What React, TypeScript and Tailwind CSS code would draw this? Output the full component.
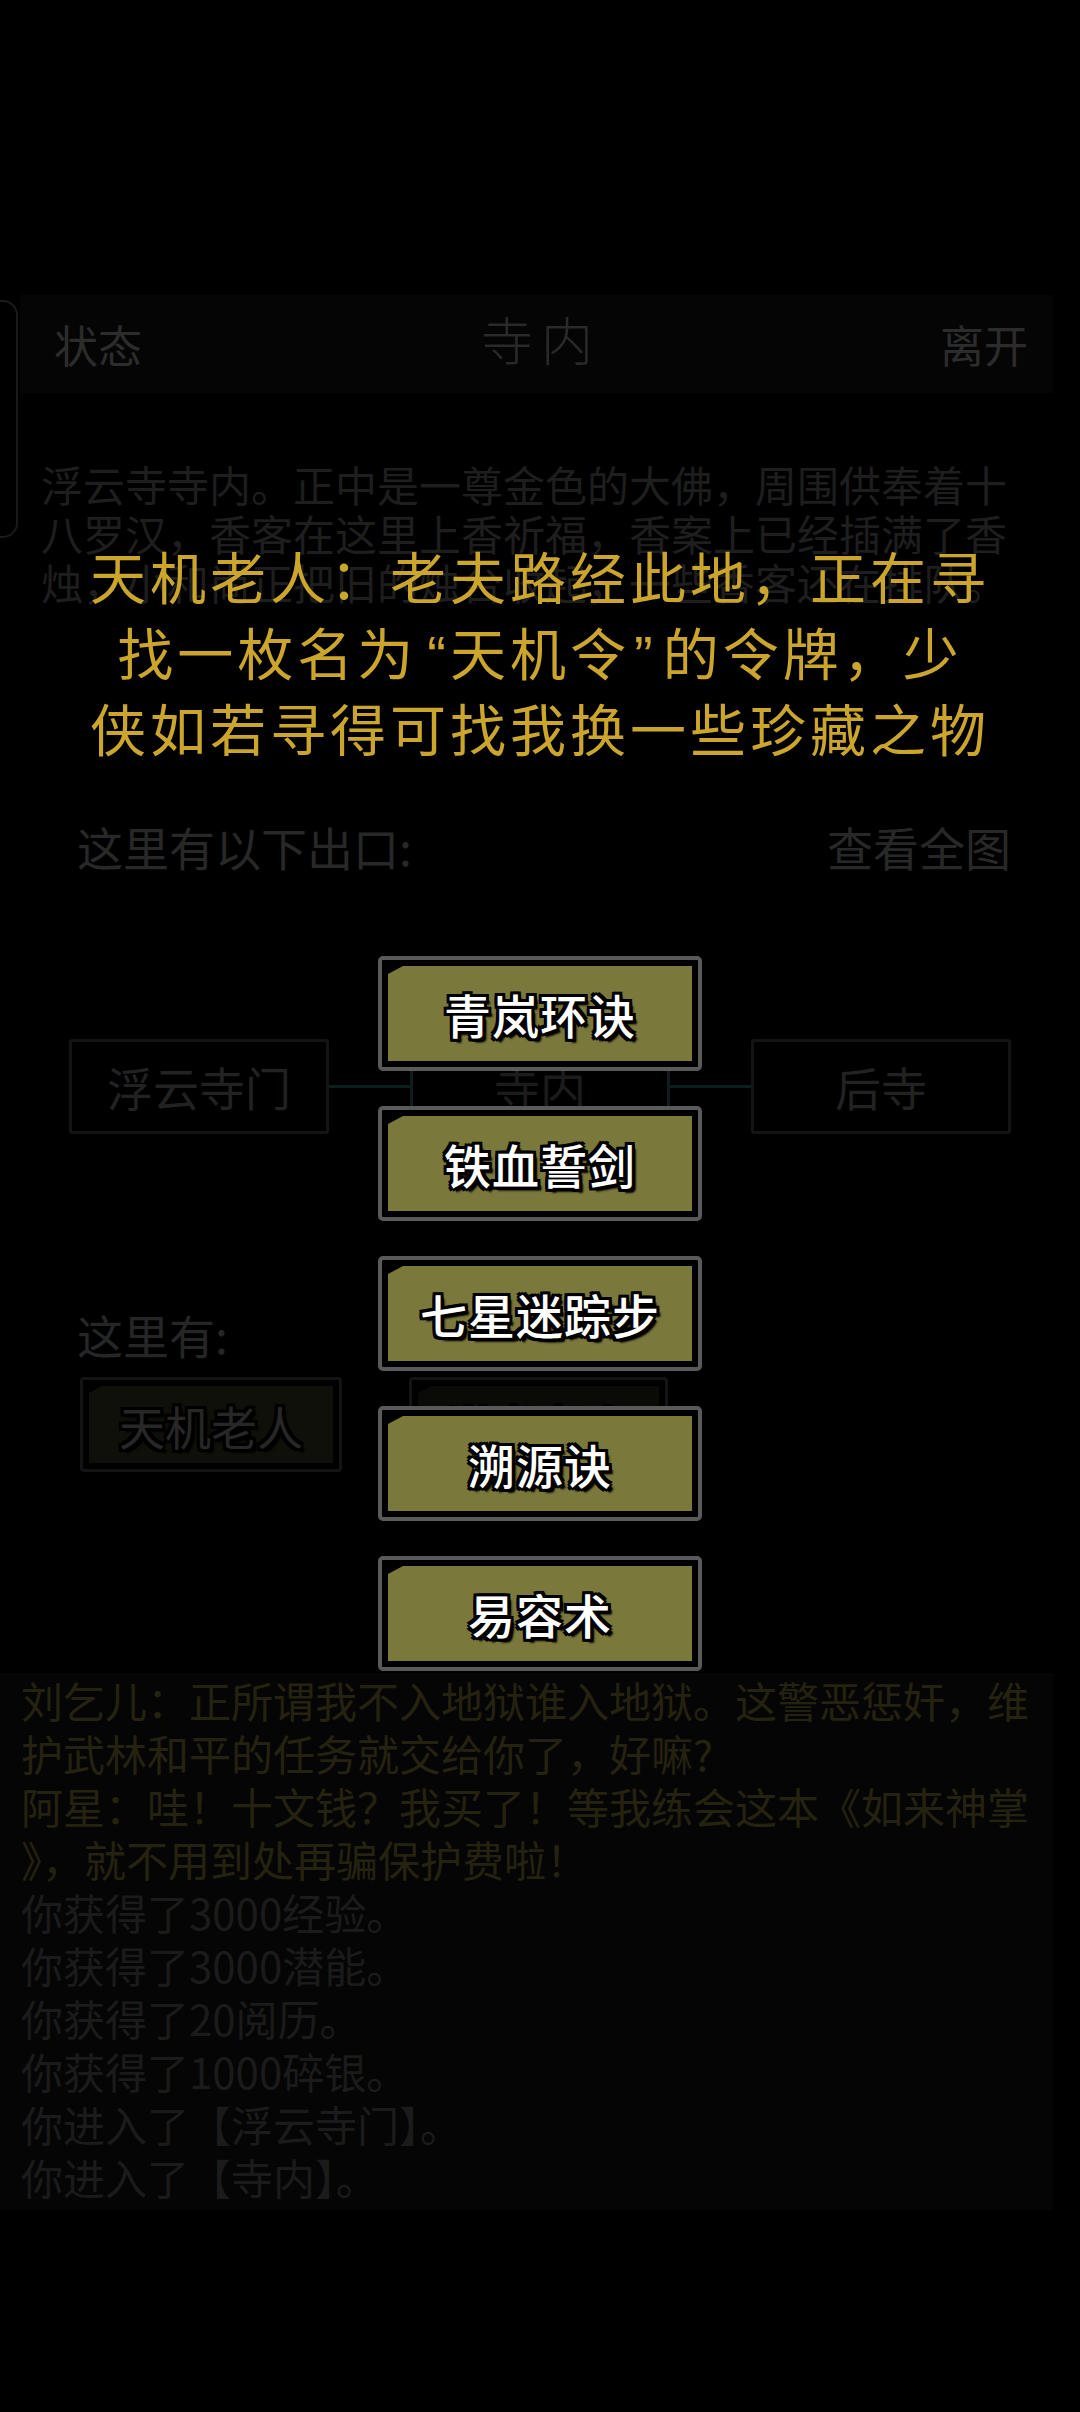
import React from 'react';

const skills = ['青岚环诀', '铁血誓剑', '七星迷踪步', '溯源诀', '易容术'];

const logLines = [
  { text: '刘乞儿：正所谓我不入地狱谁入地狱。这警恶惩奸，维', talk: true },
  { text: '护武林和平的任务就交给你了，好嘛?', talk: true },
  { text: '阿星：哇！十文钱？我买了！等我练会这本《如来神掌', talk: true },
  { text: '》，就不用到处再骗保护费啦！', talk: true },
  { text: '你获得了3000经验。', talk: false },
  { text: '你获得了3000潜能。', talk: false },
  { text: '你获得了20阅历。', talk: false },
  { text: '你获得了1000碎银。', talk: false },
  { text: '你进入了【浮云寺门】。', talk: false },
  { text: '你进入了【寺内】。', talk: false },
];

const stroke =
  '[text-shadow:-3px_-3px_0_#000,3px_-3px_0_#000,-3px_3px_0_#000,3px_3px_0_#000,0_3px_0_#000,0_-3px_0_#000,3px_0_0_#000,-3px_0_0_#000,4px_4px_2px_#000]';

const SkillButton = ({ label }: { label: string }) => (
  <div className="w-[324px] h-[115px] border-[4px] border-[#5a5a5a] rounded-[5px] bg-black p-[6px]">
    <div className="w-full h-full bg-[#7a783b] [clip-path:polygon(15px_0,100%_0,100%_100%,0_100%,0_8px)] flex items-center justify-center">
      <span className={`text-[47px] leading-none font-medium tracking-[1px] text-white ${stroke}`}>{label}</span>
    </div>
  </div>
);

const NpcButton = ({ label, width, fill }: { label: string; width: string; fill: string }) => (
  <div className={`${width} h-[95px] border-[3px] border-[#141414] rounded-[4px] bg-black p-[6px]`}>
    <div className={`w-full h-full ${fill} [clip-path:polygon(13px_0,100%_0,100%_100%,0_100%,0_7px)] flex items-center justify-center`}>
      <span className={`text-[46px] leading-none text-[#272727] ${stroke}`}>{label}</span>
    </div>
  </div>
);

const MapBox = ({ label, active }: { label: string; active?: boolean }) => (
  <div
    className={`w-[260px] h-[95px] border-[3px] rounded-[3px] flex items-center justify-center text-[46px] ${
      active ? 'border-[#0f1d1d] text-[#1c1c1c]' : 'border-[#141414] text-[#222222]'
    }`}
  >
    {label}
  </div>
);

export default function App() {
  return (
    <div className="relative w-[1080px] h-[2412px] bg-black overflow-hidden font-['Noto_Sans_CJK_SC','Noto_Sans',sans-serif]">
      {/* side drawer handle */}
      <div className="absolute left-[-20px] top-[300px] w-[38px] h-[238px] rounded-[15px] border-2 border-[#1a1a1a]" />

      <div className="pt-[295px]">
        {/* header */}
        <div className="ml-[20px] w-[1033px] h-[98px] bg-[#050505] grid grid-cols-3 items-center pl-[34px] pr-[25px]">
          <span className="justify-self-start text-[44px] text-[#2c2c2c]">状态</span>
          <span className="justify-self-center text-[52px] font-light tracking-[8px] text-[#2a2a2a] -mt-[10px]">寺内</span>
          <span className="justify-self-end text-[44px] text-[#2c2c2c]">离开</span>
        </div>

        {/* room description */}
        <div className="mt-[66px] ml-[41px] w-[970px] text-[42px] leading-[49px] text-[#1e1e1e]">
          <div>浮云寺寺内。正中是一尊金色的大佛，周围供奉着十</div>
          <div>八罗汉，香客在这里上香祈福，香案上已经插满了香</div>
          <div>烛，小和尚正把旧的烛台收起，一些香客还在排队。</div>
        </div>

        {/* exits */}
        <div className="mt-[210px] ml-[77px] w-[934px] h-[60px] flex items-center justify-between text-[46px] text-[#282828]">
          <span>这里有以下出口:</span>
          <span>查看全图</span>
        </div>

        {/* map */}
        <div className="mt-[163px] ml-[69px] flex items-center">
          <MapBox label="浮云寺门" />
          <div className="w-[81px] h-[3px] bg-[#0c1f1f]" />
          <MapBox label="寺内" active />
          <div className="w-[81px] h-[3px] bg-[#0c1f1f]" />
          <MapBox label="后寺" />
        </div>

        {/* people here */}
        <div className="mt-[170px] ml-[77px] h-[60px] flex items-center text-[46px] text-[#262626]">这里有:</div>
        <div className="mt-[13px] ml-[80px] flex gap-[67px]">
          <NpcButton label="天机老人" width="w-[262px]" fill="bg-[#10100a]" />
          <NpcButton label="说书老人" width="w-[259px]" fill="bg-[#0a0a07]" />
        </div>

        {/* message log */}
        <div className="mt-[201px] w-[1053px] bg-[#050505] pl-[21px] pb-[7px] text-[42px] leading-[53px]">
          {logLines.map((l, i) => (
            <div key={i} className={l.talk ? 'text-[#25220f]' : 'text-[#1b1b1b]'}>
              {l.text}
            </div>
          ))}
        </div>
      </div>

      {/* dialog overlay */}
      <div className="absolute inset-0 flex flex-col items-center pt-[537px]">
        <div className="text-[56px] leading-[76px] tracking-[4px] text-[#cba52c] text-center">
          <div className="h-[76px]">天机老人：老夫路经此地，正在寻</div>
          <div className="h-[76px]">
            找一枚名为<span className="font-['Liberation_Sans',sans-serif] tracking-normal pl-[10px] pr-[4px]">“</span>天机令
            <span className="font-['Liberation_Sans',sans-serif] tracking-normal pl-[4px] pr-[10px]">”</span>的令牌，少
          </div>
          <div className="h-[76px]">侠如若寻得可找我换一些珍藏之物</div>
        </div>
        <div className="mt-[191px] flex flex-col gap-[35px]">
          {skills.map((s) => (
            <SkillButton key={s} label={s} />
          ))}
        </div>
      </div>
    </div>
  );
}
